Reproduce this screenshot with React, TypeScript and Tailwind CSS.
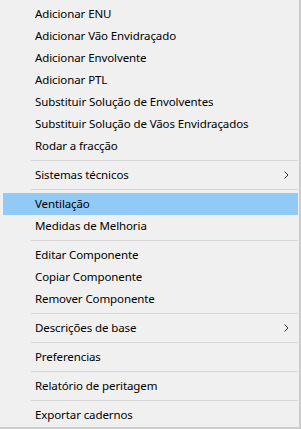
const groups: { label: string; sub?: boolean; active?: boolean }[][] = [
  [
    { label: 'Adicionar ENU' },
    { label: 'Adicionar Vão Envidraçado' },
    { label: 'Adicionar Envolvente' },
    { label: 'Adicionar PTL' },
    { label: 'Substituir Solução de Envolventes' },
    { label: 'Substituir Solução de Vãos Envidraçados' },
    { label: 'Rodar a fracção' },
  ],
  [{ label: 'Sistemas técnicos', sub: true }],
  [{ label: 'Ventilação', active: true }, { label: 'Medidas de Melhoria' }],
  [{ label: 'Editar Componente' }, { label: 'Copiar Componente' }, { label: 'Remover Componente' }],
  [{ label: 'Descrições de base', sub: true }],
  [{ label: 'Preferencias' }],
  [{ label: 'Relatório de peritagem' }],
  [{ label: 'Exportar cadernos' }],
];

function Chevron() {
  return (
    <svg width="5" height="8" viewBox="0 0 5 8" className="mr-[9px]">
      <path d="M0.5 0.5 L4 4 L0.5 7.5" fill="none" stroke="#333" strokeWidth="1" />
    </svg>
  );
}

export default function App() {
  return (
    <div
      className="w-[301px] h-[429px] bg-[#f0f0f0] border-r-2 border-b-2 border-[#cccccc] pt-[3px] pl-[3px] pr-[1px] text-[11.5px] tracking-[-0.1px] text-black"
      style={{ fontFamily: '"Noto Sans", "Open Sans", sans-serif' }}
    >
      {groups.map((group, gi) => (
        <div key={gi}>
          {gi > 0 && (
            <div className="h-[7px] flex items-center pl-[28px]">
              <div className="h-px w-full bg-[#d7d7d7]" />
            </div>
          )}
          {group.map((item) => (
            <div
              key={item.label}
              className={`h-[22px] flex items-center justify-between pl-[32px] ${item.active ? 'bg-[#91c9f7]' : ''}`}
            >
              <span className="leading-none">{item.label}</span>
              {item.sub && <Chevron />}
            </div>
          ))}
        </div>
      ))}
    </div>
  );
}
